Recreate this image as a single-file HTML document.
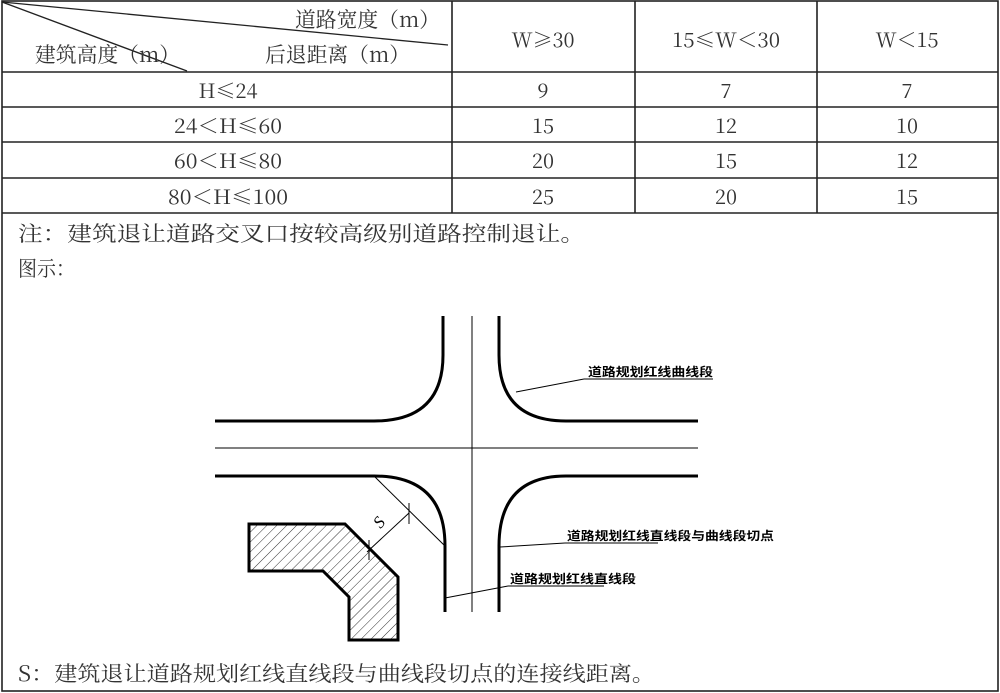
<!DOCTYPE html>
<html><head><meta charset="utf-8"><style>
html,body{margin:0;padding:0;background:#fff;}
svg{display:block}
.t{font-family:"Noto Serif CJK SC","Liberation Serif",serif;font-size:20px;fill:#333;}
.c{font-size:21px;}
.b{font-family:"Noto Sans CJK SC","Liberation Sans",sans-serif;font-size:12px;font-weight:bold;fill:#000;}
</style></head><body>
<svg width="1000" height="693" viewBox="0 0 1000 693" xmlns="http://www.w3.org/2000/svg">
<defs>
<pattern id="h" width="7" height="7" patternUnits="userSpaceOnUse" patternTransform="rotate(45)">
<line x1="0" y1="0" x2="0" y2="7" stroke="#333" stroke-width="1"/>
</pattern>
</defs>
<g stroke="#222" stroke-width="1.6" fill="none">
<rect x="2" y="1" width="996" height="690"/>
<line x1="2" y1="72" x2="998" y2="72"/>
<line x1="2" y1="107" x2="998" y2="107"/>
<line x1="2" y1="142" x2="998" y2="142"/>
<line x1="2" y1="178" x2="998" y2="178"/>
<line x1="2" y1="213" x2="998" y2="213"/>
<line x1="452" y1="1" x2="452" y2="213"/>
<line x1="635" y1="1" x2="635" y2="213"/>
<line x1="817" y1="1" x2="817" y2="213"/>
<line x1="2" y1="2" x2="448" y2="45" stroke-width="1.3"/>
<line x1="2" y1="2" x2="187" y2="71" stroke-width="1.3"/>
</g>
<g class="t">
<text class="c" x="295" y="27" textLength="145" lengthAdjust="spacingAndGlyphs">道路宽度（m）</text>
<text class="c" x="35" y="62" textLength="145" lengthAdjust="spacingAndGlyphs">建筑高度（m）</text>
<text class="c" x="265" y="62" textLength="145" lengthAdjust="spacingAndGlyphs">后退距离（m）</text>
<g text-anchor="middle">
<text x="543" y="47">W≥30</text><text x="726" y="47" textLength="108" lengthAdjust="spacingAndGlyphs">15≤W＜30</text><text x="907" y="47">W＜15</text>
<text x="228" y="98">H≤24</text><text x="543" y="98">9</text><text x="726" y="98">7</text><text x="907" y="98">7</text>
<text x="228" y="133" textLength="108" lengthAdjust="spacingAndGlyphs">24＜H≤60</text><text x="543" y="133">15</text><text x="726" y="133">12</text><text x="907" y="133">10</text>
<text x="228" y="168" textLength="108" lengthAdjust="spacingAndGlyphs">60＜H≤80</text><text x="543" y="168">20</text><text x="726" y="168">15</text><text x="907" y="168">12</text>
<text x="228" y="204" textLength="120" lengthAdjust="spacingAndGlyphs">80＜H≤100</text><text x="543" y="204">25</text><text x="726" y="204">20</text><text x="907" y="204">15</text>
</g>
<text class="c" x="18" y="241" textLength="567" lengthAdjust="spacingAndGlyphs">注：建筑退让道路交叉口按较高级别道路控制退让。</text>
<text class="c" x="18" y="276" textLength="57" lengthAdjust="spacingAndGlyphs">图示：</text>
<text class="c" x="18" y="681" textLength="637" lengthAdjust="spacingAndGlyphs">S：建筑退让道路规划红线直线段与曲线段切点的连接线距离。</text>
</g>
<!-- diagram -->
<g stroke="#000" fill="none">
<line x1="472" y1="316" x2="472" y2="612" stroke-width="1"/>
<line x1="215" y1="448" x2="698" y2="448" stroke-width="1"/>
<g stroke-width="3">
<path d="M443 316 V355 Q443 421 374 421 H215"/>
<path d="M499 316 V355 Q499 421 566 421 H698"/>
<path d="M215 476 H374 Q445 476 445 546 V612"/>
<path d="M698 476 H566 Q499 476 499 546 V612"/>
</g>
<path d="M249 524 H345 L398 577 V640 H349 V597 L323 571 H249 Z" fill="url(#h)" stroke-width="3"/>
<g stroke-width="1">
<line x1="374" y1="476" x2="445" y2="546"/>
<line x1="409" y1="513" x2="367" y2="552"/>
<line x1="409" y1="503" x2="409" y2="524"/>
<line x1="369" y1="540" x2="369" y2="560"/>
<line x1="516" y1="392" x2="584" y2="379"/>
<line x1="584" y1="379" x2="713" y2="379"/>
<line x1="500" y1="547" x2="565" y2="543"/>
<line x1="565" y1="543" x2="658" y2="543"/>
<line x1="445" y1="598" x2="508" y2="586"/>
<line x1="508" y1="586" x2="604" y2="586"/>
</g>
</g>
<text x="381" y="527" font-family="Liberation Serif,serif" font-style="italic" font-size="17" transform="rotate(-50 381 524)" text-anchor="middle">S</text>
<text class="b" x="588" y="376" textLength="125" lengthAdjust="spacingAndGlyphs">道路规划红线曲线段</text>
<text class="b" x="567" y="540" textLength="207" lengthAdjust="spacingAndGlyphs">道路规划红线直线段与曲线段切点</text>
<text class="b" x="510" y="583" textLength="126" lengthAdjust="spacingAndGlyphs">道路规划红线直线段</text>
</svg>
</body></html>
